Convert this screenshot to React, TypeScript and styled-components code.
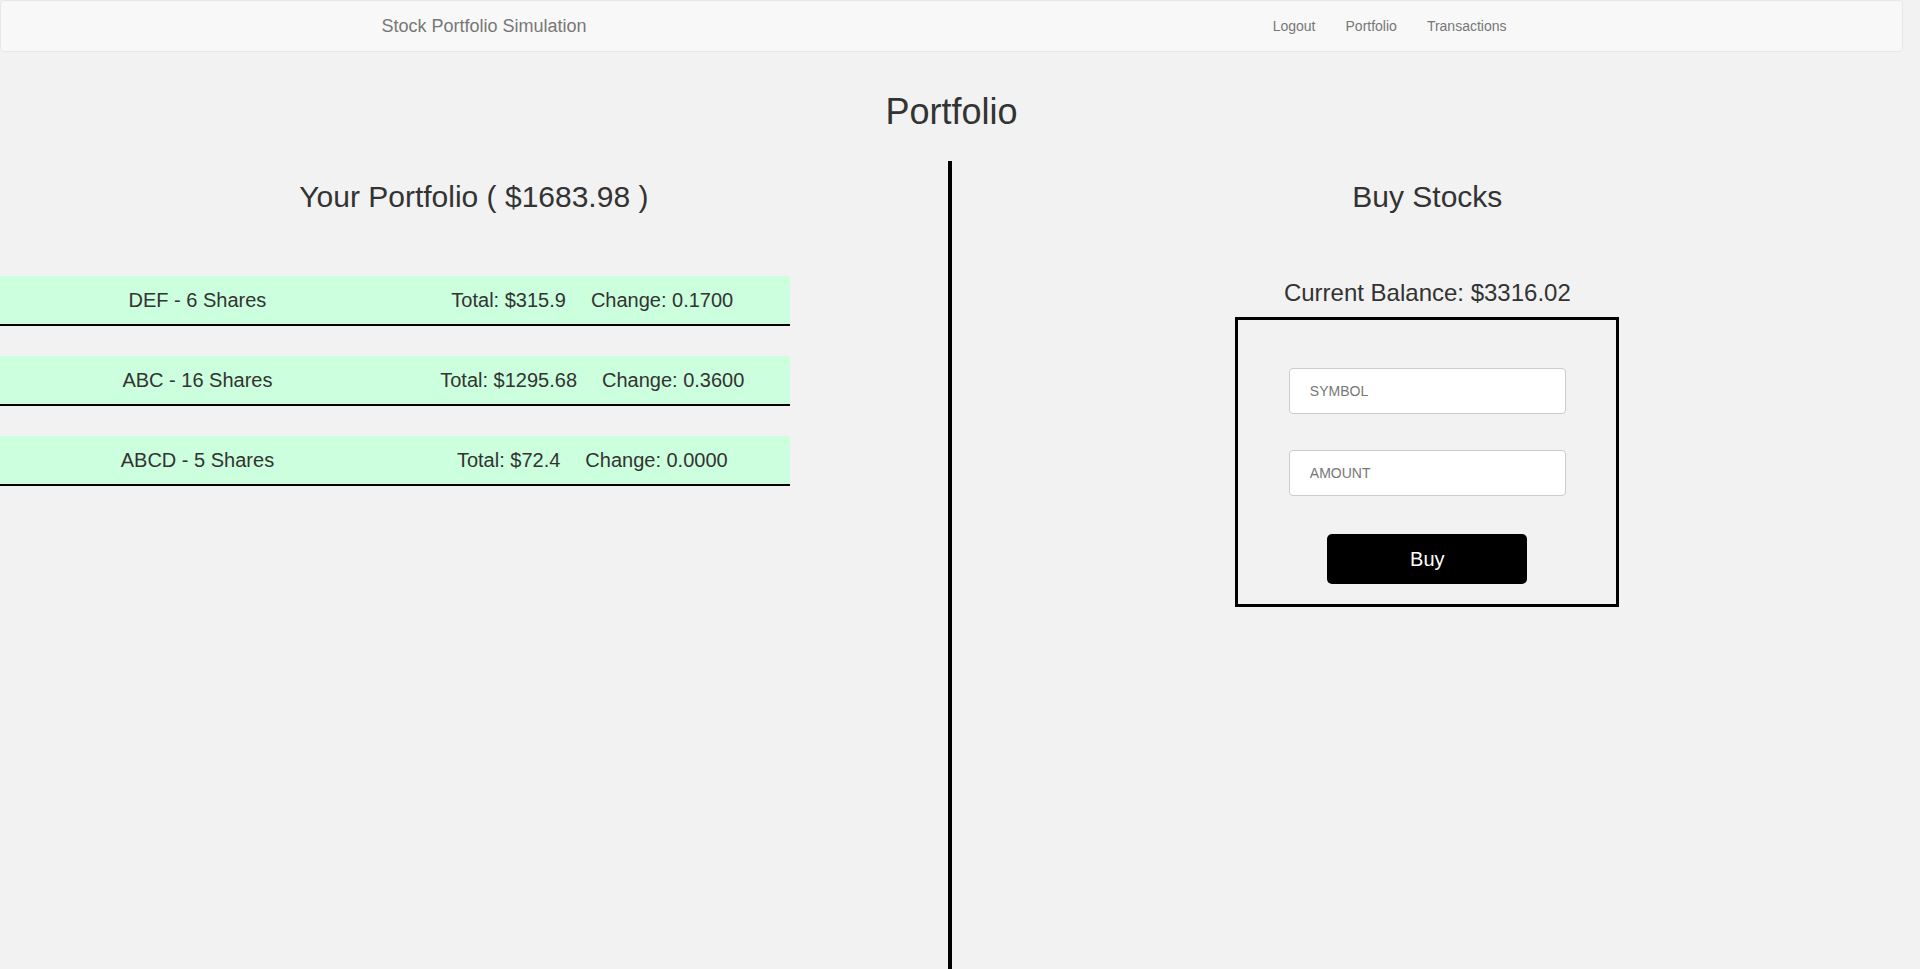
import React from 'react';
import styled, { createGlobalStyle } from 'styled-components';

interface Holding {
  symbol: string;
  shares: number;
  total: string;
  change: string;
}

const holdings: Holding[] = [
  { symbol: 'DEF', shares: 6, total: '315.9', change: '0.1700' },
  { symbol: 'ABC', shares: 16, total: '1295.68', change: '0.3600' },
  { symbol: 'ABCD', shares: 5, total: '72.4', change: '0.0000' },
];

// the page was laid out beside a 17px classic scrollbar
const GlobalStyle = createGlobalStyle`
  * {
    box-sizing: border-box;
  }
  html {
    background: #f2f2f2;
  }
  body {
    margin: 0 17px 0 0;
    background: #f2f2f2;
    color: #333;
    font-family: "Liberation Sans", Arial, Helvetica, sans-serif;
    font-size: 14px;
  }
`;

const Navbar = styled.nav`
  min-height: 50px;
  background: #f8f8f8;
  border: 1px solid #e7e7e7;
  border-radius: 4px;
`;

const NavContainer = styled.div`
  width: 1170px;
  margin: 0 auto;
  padding: 0 15px;
  height: 50px;
  display: flex;
  align-items: center;
  justify-content: space-between;
`;

const Brand = styled.a`
  margin-left: -15px;
  padding: 15px;
  font-size: 18px;
  line-height: 20px;
  color: #777;
  text-decoration: none;
`;

const NavLinks = styled.ul`
  display: flex;
  list-style: none;
  margin: 0;
  padding: 0;
`;

const NavLink = styled.a`
  display: block;
  padding: 15px;
  font-size: 14px;
  line-height: 20px;
  color: #777;
  text-decoration: none;
`;

const PageTitle = styled.h1`
  margin: 40px 0 29px;
  font-size: 36px;
  font-weight: 500;
  line-height: 40px;
  text-align: center;
`;

const Columns = styled.div`
  display: grid;
  grid-template-columns: 49.8% 1fr;
  min-height: 100vh;
`;

const Column = styled.section<{ $divider?: boolean }>`
  display: flex;
  flex-direction: column;
  border-left: ${(p) => (p.$divider ? '4px solid #000' : 'none')};
`;

const SectionTitle = styled.h2`
  margin: 19px 0 0;
  font-size: 30px;
  font-weight: 500;
  line-height: 33px;
  text-align: center;
`;

const HoldingList = styled.div`
  margin-top: 63px;
  display: flex;
  flex-direction: column;
  gap: 30px;
`;

const HoldingRow = styled.div`
  width: 83.3333%;
  display: grid;
  grid-template-columns: 1fr 1fr;
  background: #ccffdd;
  border-bottom: 2px solid #000;
  font-size: 20px;
  line-height: 48px;
`;

const Cell = styled.div`
  display: flex;
  justify-content: center;
  gap: 25px;
`;

const Balance = styled.h3`
  margin: 67px 0 11px;
  font-size: 24px;
  font-weight: 500;
  line-height: 26px;
  text-align: center;
`;

const BuyForm = styled.form`
  width: 384px;
  margin: 0 auto;
  border: 3px solid #000;
  padding: 48px 0 20px;
  display: flex;
  flex-direction: column;
  align-items: center;
`;

const Field = styled.input`
  width: 277px;
  height: 46px;
  padding: 0 20px;
  border: 1px solid #ccc;
  border-radius: 4px;
  background: #fff;
  font-family: inherit;
  font-size: 14px;
  color: #555;
  margin-bottom: ${(p) => (p.name === 'amount' ? '38px' : '36px')};

  &::placeholder {
    color: #777;
  }
`;

const BuyButton = styled.button`
  width: 200px;
  height: 50px;
  border: none;
  border-radius: 5px;
  background: #000;
  color: #fff;
  font-family: inherit;
  font-size: 20px;
  cursor: pointer;
`;

const App = () => {
  return (
    <>
      <GlobalStyle />
      <Navbar>
        <NavContainer>
          <Brand href="#">Stock Portfolio Simulation</Brand>
          <NavLinks>
            <li><NavLink href="#">Logout</NavLink></li>
            <li><NavLink href="#">Portfolio</NavLink></li>
            <li><NavLink href="#">Transactions</NavLink></li>
          </NavLinks>
        </NavContainer>
      </Navbar>

      <PageTitle>Portfolio</PageTitle>

      <Columns>
        <Column>
          <SectionTitle>Your Portfolio ( $1683.98 )</SectionTitle>
          <HoldingList>
            {holdings.map((h) => (
              <HoldingRow key={h.symbol}>
                <Cell>{h.symbol} - {h.shares} Shares</Cell>
                <Cell>
                  <span>Total: ${h.total}</span>
                  <span>Change: {h.change}</span>
                </Cell>
              </HoldingRow>
            ))}
          </HoldingList>
        </Column>

        <Column $divider>
          <SectionTitle>Buy Stocks</SectionTitle>
          <Balance>Current Balance: $3316.02</Balance>
          <BuyForm onSubmit={(e) => e.preventDefault()}>
            <Field name="symbol" placeholder="SYMBOL" />
            <Field name="amount" placeholder="AMOUNT" />
            <BuyButton type="submit">Buy</BuyButton>
          </BuyForm>
        </Column>
      </Columns>
    </>
  );
};

export default App;
